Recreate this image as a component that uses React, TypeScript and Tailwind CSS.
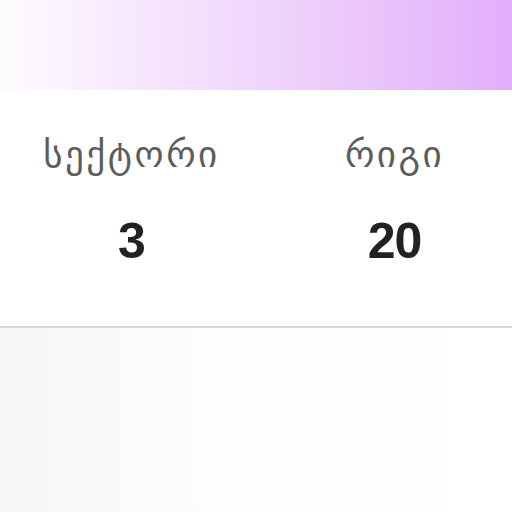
export default function App() {
  const stats = [
    { label: 'სექტორი', value: '3' },
    { label: 'რიგი', value: '20' },
  ]

  return (
    <div className="w-[512px] h-[512px] overflow-hidden flex flex-col bg-white" style={{ fontFamily: '"DejaVu Sans", "Liberation Sans", sans-serif' }}>
      <div className="h-[90px] shrink-0 bg-gradient-to-r from-[#fefcff] via-[#f0d6fb] to-[#e2affa]" />

      <div className="h-[238px] shrink-0 bg-white border-b-2 border-[#d6d6d6] flex">
        {stats.map(s => (
          <div key={s.label} className="w-[263px] shrink-0 flex flex-col items-center pt-[40px]">
            <div className="text-[37px] leading-[50px] tracking-[2.5px] text-[#5c5c5c]">{s.label}</div>
            <div className="mt-[36px] text-[50px] leading-[50px] font-bold text-[#222] tracking-[-1px]" style={{ fontFamily: '"Liberation Sans", Arial, sans-serif' }}>
              {s.value}
            </div>
          </div>
        ))}
      </div>

      <div className="flex-1 bg-gradient-to-r from-[#f4f6f8] via-[#fdfdfe] via-40% to-white" />
    </div>
  )
}
